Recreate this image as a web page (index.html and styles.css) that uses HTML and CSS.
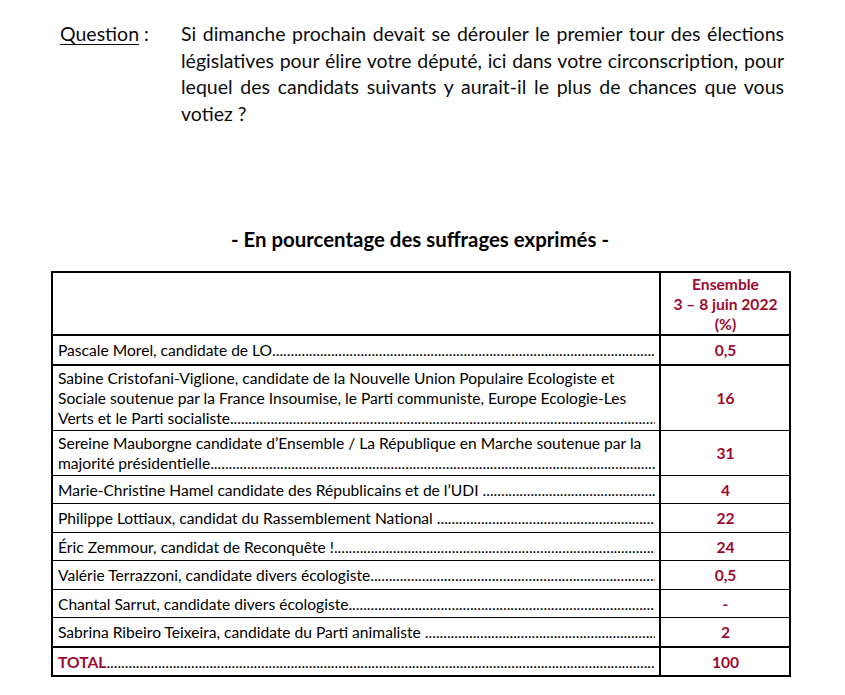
FILE: index.html
```html
<!DOCTYPE html>
<html lang="fr">
<head>
<meta charset="utf-8">
<title>Sondage législatives</title>
<link rel="stylesheet" href="styles.css">
</head>
<body>
<div class="page">
  <div class="question">
    <div class="q-label"><span class="u">Question</span> :</div>
    <div class="q-text">
      <span class="q-line">Si dimanche prochain devait se dérouler le premier tour des élections</span>
      <span class="q-line">législatives pour élire votre député, ici dans votre circonscription, pour</span>
      <span class="q-line">lequel des candidats suivants y aurait-il le plus de chances que vous</span>
      <span class="q-line last">votiez ?</span>
    </div>
  </div>

  <div class="title">- En pourcentage des suffrages exprimés -</div>

  <table class="results">
    <colgroup>
      <col class="c-name">
      <col class="c-val">
    </colgroup>
    <tr class="head">
      <td class="name"></td>
      <td class="val">Ensemble<br>3 – 8 juin 2022<br>(%)</td>
    </tr>
    <tr class="single thick">
      <td class="name"><div class="ll"><span class="t">Pascale Morel, candidate de LO</span><span class="lead"></span></div></td>
      <td class="val">0,5</td>
    </tr>
    <tr class="multi">
      <td class="name">
        <div>Sabine Cristofani-Viglione, candidate de la Nouvelle Union Populaire Ecologiste et</div>
        <div>Sociale soutenue par la France Insoumise, le Parti communiste, Europe Ecologie-Les</div>
        <div class="ll"><span class="t">Verts et le Parti socialiste</span><span class="lead"></span></div>
      </td>
      <td class="val">16</td>
    </tr>
    <tr class="multi">
      <td class="name">
        <div>Sereine Mauborgne candidate d’Ensemble / La République en Marche soutenue par la</div>
        <div class="ll"><span class="t">majorité présidentielle</span><span class="lead"></span></div>
      </td>
      <td class="val">31</td>
    </tr>
    <tr class="single">
      <td class="name"><div class="ll"><span class="t">Marie-Christine Hamel candidate des Républicains et de l’UDI&nbsp;</span><span class="lead"></span></div></td>
      <td class="val">4</td>
    </tr>
    <tr class="single">
      <td class="name"><div class="ll"><span class="t">Philippe Lottiaux, candidat du Rassemblement National&nbsp;</span><span class="lead"></span></div></td>
      <td class="val">22</td>
    </tr>
    <tr class="single">
      <td class="name"><div class="ll"><span class="t">Éric Zemmour, candidat de Reconquête !</span><span class="lead"></span></div></td>
      <td class="val">24</td>
    </tr>
    <tr class="single">
      <td class="name"><div class="ll"><span class="t">Valérie Terrazzoni, candidate divers écologiste</span><span class="lead"></span></div></td>
      <td class="val">0,5</td>
    </tr>
    <tr class="single">
      <td class="name"><div class="ll"><span class="t">Chantal Sarrut, candidate divers écologiste</span><span class="lead"></span></div></td>
      <td class="val">-</td>
    </tr>
    <tr class="single">
      <td class="name"><div class="ll"><span class="t">Sabrina Ribeiro Teixeira, candidate du Parti animaliste&nbsp;</span><span class="lead"></span></div></td>
      <td class="val">2</td>
    </tr>
    <tr class="single total">
      <td class="name"><div class="ll"><span class="t red">TOTAL</span><span class="lead"></span></div></td>
      <td class="val">100</td>
    </tr>
  </table>
</div>
</body>
</html>
```
FILE: styles.css
```css
body {
  margin: 0;
  background: #fff;
  color: #000;
  font-family: Lato, "Open Sans", sans-serif;
}

.page {
  width: 738px;
  margin-left: 51px;
  padding-top: 21px;
}

.question {
  display: flex;
  font-size: 19.5px;
  line-height: 26.5px;
  color: #0d0d0d;
}

.q-label {
  flex: none;
  width: 121px;
  padding-left: 9px;
}

.u {
  text-decoration: underline;
  text-decoration-thickness: 1px;
  text-underline-offset: 3px;
}

.q-text {
  width: 603px;
}

.q-line {
  display: block;
  white-space: nowrap;
  text-align: justify;
  text-align-last: justify;
}

.q-line.last {
  text-align-last: left;
}

.title {
  margin-top: 101px;
  margin-bottom: 20px;
  text-align: center;
  font-weight: bold;
  font-size: 20.4px;
  line-height: 23px;
}

.results {
  width: 738px;
  table-layout: fixed;
  border-collapse: collapse;
  font-size: 15.6px;
  line-height: 20px;
  border: 2px solid #000;
}

.c-name {
  width: 608px;
}

.c-val {
  width: 130px;
}

.results td {
  border: 1px solid #000;
  padding: 2px 4px 2px 5px;
  overflow: hidden;
}

.results td.name {
  vertical-align: middle;
}

.results td.name > div {
  white-space: nowrap;
}

.results td.val {
  text-align: center;
  vertical-align: middle;
  font-weight: bold;
  color: #9e0a2e;
  border-left: 2px solid #000;
  border-right: 2px solid #000;
}

.results tr.head td {
  height: 54px;
  padding-top: 1px;
  padding-bottom: 0;
  vertical-align: top;
  border-bottom: 2px solid #000;
}

.results tr.head td.val {
  vertical-align: top;
  line-height: 20px;
}

.results tr.single td {
  padding-top: 4px;
  padding-bottom: 3.5px;
}

.results tr.thick td {
  border-bottom: 2px solid #000;
}

.results tr.total td {
  border-top: 2px solid #000;
}

.ll {
  display: flex;
  white-space: nowrap;
}

.ll .t {
  flex: none;
}

.lead {
  flex: 1 1 0;
  min-width: 0;
  overflow: hidden;
}

.lead::after {
  content: "..............................................................................................................................................................................................................";
}

.red {
  color: #9e0a2e;
  font-weight: bold;
}
```
